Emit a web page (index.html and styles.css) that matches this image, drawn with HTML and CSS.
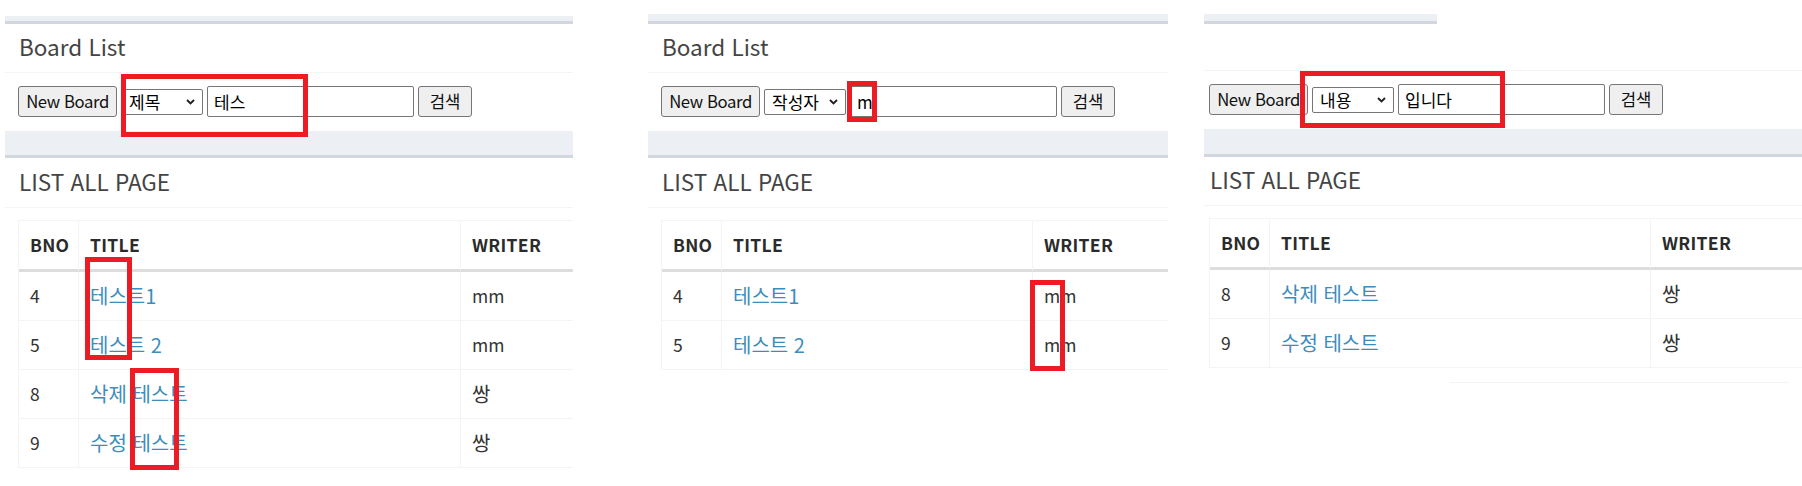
FILE: index.html
```html
<!DOCTYPE html>
<html lang="ko">
<head>
<meta charset="utf-8">
<title>Board List</title>
<link rel="stylesheet" href="styles.css">
</head>
<body>
<div class="shots">

  <section class="shot shot-1">
    <div class="band band-top"></div>
    <div class="box search-box">
      <div class="box-header"><h3 class="box-title">Board List</h3></div>
      <div class="box-body search-row">
        <button class="btn btn-new" type="button">New Board</button>
        <div class="select"><span>제목</span><svg class="chev" viewBox="0 0 9 6" width="9" height="6"><path d="M1 1 L4.5 4.5 L8 1"/></svg></div>
        <input class="field-input" type="text" value="테스">
        <button class="btn btn-search" type="button">검색</button>
      </div>
    </div>
    <div class="band band-mid"></div>
    <div class="box list-box">
      <div class="box-header"><h3 class="box-title">LIST ALL PAGE</h3></div>
      <div class="box-body table-body">
        <table class="board-table">
          <colgroup><col class="col-bno"><col class="col-title"><col class="col-writer"></colgroup>
          <thead><tr class="head-row"><th>BNO</th><th>TITLE</th><th>WRITER</th></tr></thead>
          <tbody>
            <tr><td>4</td><td><a href="#">테스트1</a></td><td>mm</td></tr>
            <tr><td>5</td><td><a href="#">테스트 2</a></td><td>mm</td></tr>
            <tr><td>8</td><td><a href="#">삭제 테스트</a></td><td class="kr">쌍</td></tr>
            <tr><td>9</td><td><a href="#">수정 테스트</a></td><td class="kr">쌍</td></tr>
          </tbody>
        </table>
      </div>
    </div>
    <div class="mark mark-1a"></div>
    <div class="mark mark-1b"></div>
    <div class="mark mark-1c"></div>
  </section>

  <section class="shot shot-2">
    <div class="band band-top"></div>
    <div class="box search-box">
      <div class="box-header"><h3 class="box-title">Board List</h3></div>
      <div class="box-body search-row">
        <button class="btn btn-new" type="button">New Board</button>
        <div class="select"><span>작성자</span><svg class="chev" viewBox="0 0 9 6" width="9" height="6"><path d="M1 1 L4.5 4.5 L8 1"/></svg></div>
        <input class="field-input" type="text" value="m">
        <button class="btn btn-search" type="button">검색</button>
      </div>
    </div>
    <div class="band band-mid"></div>
    <div class="box list-box">
      <div class="box-header"><h3 class="box-title">LIST ALL PAGE</h3></div>
      <div class="box-body table-body">
        <table class="board-table">
          <colgroup><col class="col-bno"><col class="col-title"><col class="col-writer"></colgroup>
          <thead><tr class="head-row"><th>BNO</th><th>TITLE</th><th>WRITER</th></tr></thead>
          <tbody>
            <tr><td>4</td><td><a href="#">테스트1</a></td><td>mm</td></tr>
            <tr><td>5</td><td><a href="#">테스트 2</a></td><td>mm</td></tr>
          </tbody>
        </table>
      </div>
    </div>
    <div class="mark mark-2a"></div>
    <div class="mark mark-2b"></div>
  </section>

  <section class="shot shot-3">
    <div class="band band-top"></div>
    <div class="box search-box">
      <div class="box-header"></div>
      <div class="box-body search-row">
        <button class="btn btn-new" type="button">New Board</button>
        <div class="select"><span>내용</span><svg class="chev" viewBox="0 0 9 6" width="9" height="6"><path d="M1 1 L4.5 4.5 L8 1"/></svg></div>
        <input class="field-input" type="text" value="입니다">
        <button class="btn btn-search" type="button">검색</button>
      </div>
    </div>
    <div class="band band-mid"></div>
    <div class="box list-box">
      <div class="box-header"><h3 class="box-title">LIST ALL PAGE</h3></div>
      <div class="box-body table-body">
        <table class="board-table">
          <colgroup><col class="col-bno"><col class="col-title"><col class="col-writer"></colgroup>
          <thead><tr class="head-row"><th>BNO</th><th>TITLE</th><th>WRITER</th></tr></thead>
          <tbody>
            <tr><td>8</td><td><a href="#">삭제 테스트</a></td><td class="kr">쌍</td></tr>
            <tr><td>9</td><td><a href="#">수정 테스트</a></td><td class="kr">쌍</td></tr>
          </tbody>
        </table>
        <div class="footer-line"></div>
      </div>
    </div>
    <div class="mark mark-3a"></div>
  </section>

</div>
</body>
</html>
```

FILE: styles.css
```css
html, body {
  margin: 0;
  padding: 0;
  background: #ffffff;
}

body {
  font-family: "Noto Sans CJK KR", "Noto Sans", sans-serif;
  color: #333333;
}

.shots {
  display: flex;
  align-items: flex-start;
  height: 486px;
  overflow: hidden;
}

.shot {
  position: relative;
  flex: none;
  height: 486px;
  overflow: hidden;
  box-sizing: border-box;
}

.shot-1 { margin-left: 5px;  width: 568px; padding-top: 16px; }
.shot-2 { margin-left: 75px; width: 520px; padding-top: 14px; }
.shot-3 { margin-left: 36px; width: 598px; padding-top: 14px; }

/* grey content-wrapper strips with the box top border */
.band {
  background: #ecf0f5;
  border-bottom: 3px solid #d2d6de;
}
.band-top { height: 5px; }
.shot-2 .band-top,
.shot-3 .band-top { height: 7px; }
.shot-3 .band-top { width: 233px; }

.band-mid { height: 24px; }
.shot-3 .band-mid { height: 25px; }

.box {
  background: #ffffff;
}

.box-header {
  height: 39px;
  padding: 9px 14px 0;
  border-bottom: 1px solid #f4f4f4;
}
.shot-3 .search-box .box-header { height: 37px; }
.list-box .box-header { padding-top: 10px; }
.shot-3 .list-box .box-header { padding-top: 9px; }
.shot-3 .box-header { padding-left: 6px; }

.box-title {
  margin: 0;
  font-size: 22.5px;
  font-weight: 400;
  line-height: 27px;
  color: #444444;
  white-space: nowrap;
}

/* search row */
.search-row {
  display: flex;
  align-items: center;
  gap: 4px;
  height: 31px;
  padding: 13px 13px 14px;
}
.shot-3 .search-row { padding-left: 5px; }

.btn {
  flex: none;
  box-sizing: border-box;
  height: 31px;
  margin: 0;
  padding: 0;
  border: 1px solid #767676;
  border-radius: 3px;
  background: #efefef;
  color: #111111;
  font-family: "Noto Sans CJK KR", "Noto Sans", sans-serif;
  font-size: 16.7px;
  line-height: 29px;
  text-align: center;
}
.btn-new {
  width: 99px;
  letter-spacing: -0.4px;
}
.btn-search {
  width: 54px;
}

.select {
  flex: none;
  display: flex;
  align-items: center;
  justify-content: space-between;
  box-sizing: border-box;
  width: 82px;
  height: 26px;
  padding: 0 7px 0 7px;
  border: 1px solid #767676;
  border-radius: 2px;
  background: #ffffff;
  color: #000000;
  font-size: 17px;
  line-height: 24px;
}

.chev {
  flex: none;
  fill: none;
  stroke: #222222;
  stroke-width: 1.9;
}

.field-input {
  flex: none;
  box-sizing: border-box;
  width: 207px;
  height: 31px;
  margin: 0;
  padding: 0 6px;
  border: 1px solid #767676;
  border-radius: 2px;
  background: #ffffff;
  color: #000000;
  font-family: "Noto Sans CJK KR", "Noto Sans", sans-serif;
  font-size: 17px;
  outline: none;
}

/* list table */
.table-body {
  padding: 12px 13px 0;
}
.shot-3 .table-body { padding-left: 5px; }

.board-table {
  table-layout: fixed;
  border-collapse: separate;
  border-spacing: 0;
  border-top: 1px solid #f4f4f4;
  border-left: 1px solid #f4f4f4;
  width: 643px;
  font-size: 17.5px;
  line-height: 24px;
}
.shot-2 .board-table { width: 572px; }
.shot-3 .board-table { width: 642px; }

.col-bno { width: 60px; }
.col-title { width: 382px; }
.shot-2 .col-title { width: 311px; }
.shot-3 .col-title { width: 381px; }
.col-writer { width: 200px; }

.board-table th,
.board-table td {
  padding: 0 11px;
  text-align: left;
  vertical-align: middle;
  border-right: 1px solid #f4f4f4;
  border-bottom: 1px solid #f4f4f4;
  white-space: nowrap;
  overflow: hidden;
}

.board-table tr { height: 49px; }
.board-table .head-row { height: 51px; }

.board-table th {
  border-bottom: 3px solid #dddddd;
  font-weight: 700;
  letter-spacing: 0.3px;
  color: #2b2b2b;
}

.board-table a {
  color: #3c8dbc;
  text-decoration: none;
  font-size: 20px;
}

.board-table .kr {
  font-size: 20px;
}

.footer-line {
  margin: 14px 0 0 241px;
  border-top: 1px solid #f4f4f4;
}

/* red annotation rectangles drawn over the screenshots */
.mark {
  position: absolute;
  box-sizing: border-box;
  border: 5px solid #ed1c24;
  pointer-events: none;
}
.mark-1a { left: 116px; top: 74px;  width: 187px; height: 63px; }
.mark-1b { left: 80px;  top: 257px; width: 47px;  height: 103px; }
.mark-1c { left: 125px; top: 368px; width: 49px;  height: 102px; }
.mark-2a { left: 199px; top: 81px;  width: 30px;  height: 41px; }
.mark-2b { left: 382px; top: 280px; width: 35px;  height: 91px; }
.mark-3a { left: 96px;  top: 71px;  width: 205px; height: 57px; }
```
